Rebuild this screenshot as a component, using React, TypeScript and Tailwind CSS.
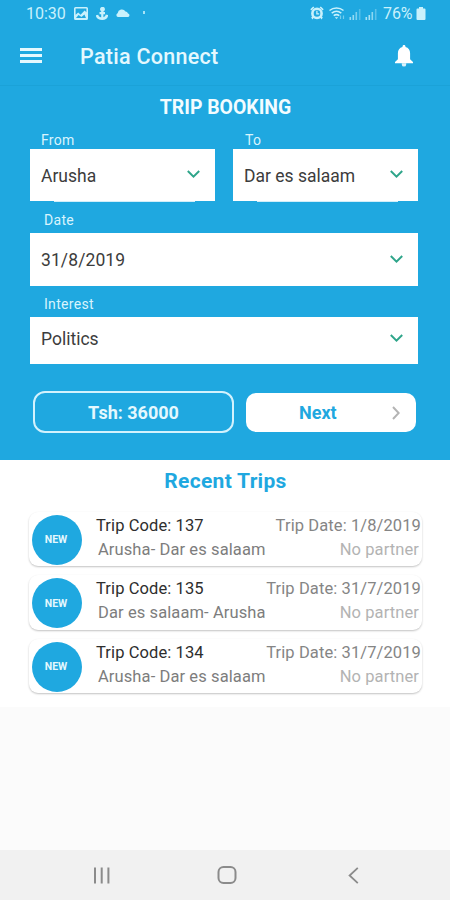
import React from 'react';

interface Trip {
  code: string;
  date: string;
  route: string;
  partner: string;
}

interface SelectFieldProps {
  label: string;
  value: string;
  labelClass: string;
  boxClass: string;
}

const trips: Trip[] = [
  { code: '137', date: '1/8/2019', route: 'Arusha- Dar es salaam', partner: 'No partner' },
  { code: '135', date: '31/7/2019', route: 'Dar es salaam- Arusha', partner: 'No partner' },
  { code: '134', date: '31/7/2019', route: 'Arusha- Dar es salaam', partner: 'No partner' }
];

const SignalIcon = ({ className }: { className: string }) => (
  <svg viewBox="0 0 12 12" className={className} fill="currentColor">
    <rect x="0" y="9" width="1.6" height="3" />
    <rect x="3" y="7" width="1.6" height="5" />
    <rect x="6" y="4" width="1.6" height="8" opacity="0.8" />
    <rect x="9.4" y="1" width="1.6" height="11" opacity="0.45" />
  </svg>
);

const StatusBar = () => (
  <div className="flex h-7 items-center pl-[26px] pr-[24px] text-[#c9f1fc]">
    <span className="w-[40px] whitespace-nowrap text-[16px] leading-7">10:30</span>
    <svg viewBox="0 0 14 13" className="mb-0.5 ml-[8px] h-[13px] w-[14px]">
      <path
        fill="currentColor"
        fillRule="evenodd"
        d="M1.5 0h11A1.5 1.5 0 0 1 14 1.5v10a1.5 1.5 0 0 1-1.5 1.5h-11A1.5 1.5 0 0 1 0 11.5v-10A1.5 1.5 0 0 1 1.5 0zM1.6 1.6v6.2l2.6-2.2 2.4 2.2 4-4.2 1.8 1.6V1.6zM2 11h10L10.4 7.5 7.5 10 4.5 8z"
      />
    </svg>
    <svg viewBox="0 0 12 13" className="mb-0.5 ml-[8px] h-[13px] w-[12px]" fill="none" stroke="currentColor">
      <circle cx="6.5" cy="2.3" r="1.7" strokeWidth="1.5" fill="currentColor" />
      <path strokeWidth="2.2" d="M6.3 4v7.5M3.5 6.2h5.5" />
      <path strokeWidth="2.6" d="M1 8c.5 2.600 2.500 3.700 5.300 3.700S10.600 10.400 11 7.800" />
    </svg>
    <svg viewBox="0 0 14 8" className="mb-[3px] ml-[8px] h-[8px] w-[14px]" fill="currentColor">
      <path d="M2 8A2 2 0 0 1 1.600 4.200 4.300 4.300 0 0 1 9.500 2.500 3 3 0 0 1 12 4.400 1.900 1.900 0 0 1 12.300 8z" />
    </svg>
    <span className="mb-[3px] ml-[13px] h-[3px] w-[2px] bg-current opacity-80" />
    <svg viewBox="0 0 14 14" className="mb-0.5 ml-auto h-[14px] w-[14px]">
      <path
        fill="currentColor"
        d="M.3 3.2 3.200.4l1.200 1.200-3 2.800zM13.700 3.200 10.800.4 9.600 1.600l3 2.800zM1.200 11.600l1.600-1.600 1.200 1.600-1.600 1.800zM12.800 11.600l-1.600-1.600-1.200 1.600 1.600 1.800z"
      />
      <circle cx="7" cy="7.4" r="4.6" fill="none" stroke="currentColor" strokeWidth="2.6" />
      <path fill="none" stroke="currentColor" strokeWidth="1.3" d="M6.9 4.8v3h2.3" />
    </svg>
    <svg viewBox="0 0 18 13" className="mb-0.5 ml-[5px] h-[13px] w-[18px]" fill="none" stroke="currentColor">
      <path strokeWidth="1.5" d="M.5 3.5C4.500.2 10.500.2 14.500 3.500" />
      <path strokeWidth="1.5" d="M2.7 6.2c3-2.400 6.600-2.400 9.600 0" />
      <path strokeWidth="1.5" d="M4.7 8.7c1.800-1.400 3.800-1.400 5.600 0" />
      <path fill="currentColor" stroke="none" d="M5.8 10.2h3.4L7.5 12z" />
      <path strokeWidth="1.2" opacity="0.5" d="M11.5 8.5V12M14.5 8.5V12" />
    </svg>
    <SignalIcon className="ml-0.5 h-[12px] w-[13px] opacity-70" />
    <SignalIcon className="ml-[3px] h-[12px] w-[13px] opacity-80" />
    <span className="ml-[5px] w-[31px] whitespace-nowrap text-[16px] leading-7 tracking-[-0.1px]">76%</span>
    <svg viewBox="0 0 10 13" className="mb-[1px] ml-[2px] h-[13px] w-[10px]" fill="currentColor">
      <path d="M3 0h4v1.5h1.5A1 1 0 0 1 9.500 2.500V12a1 1 0 0 1-1 1h-7a1 1 0 0 1-1-1V2.500a1 1 0 0 1 1-1H3z" />
    </svg>
  </div>
);

const AppBar = () => (
  <div className="flex h-[58px] items-center border-b border-[#1ba2d8] pl-[20px] pr-[37px]">
    <button type="button" className="mb-[2px] flex w-[22px] flex-col gap-[3px]" aria-label="Menu">
      <span className="h-[3px] w-full bg-[#e4f8fe]" />
      <span className="h-[3px] w-full bg-[#e4f8fe]" />
      <span className="h-[3px] w-full bg-[#e4f8fe]" />
    </button>
    <h1 className="ml-[38px] text-[21.5px] font-medium leading-none tracking-[0.28px] text-[#e4f8fe]">
      Patia Connect
    </h1>
    <svg viewBox="0 0 18 22" className="mb-[1px] ml-auto h-[22px] w-[18px] fill-white">
      <path d="M9 0c.9 0 1.500.6 1.500 1.500v.6c3 .7 4.600 3.200 4.600 6.200v6L18 17v1.300H0V17l2.900-2.700v-6c0-3 1.600-5.500 4.600-6.200v-.6C7.500.6 8.100 0 9 0z" />
      <path d="M6.8 18.200h4.400v1.200a2.200 2.200 0 0 1-4.400 0z" opacity="0.85" />
    </svg>
  </div>
);

const SelectField: React.FC<SelectFieldProps> = ({ label, value, labelClass, boxClass }) => (
  <div className="flex-1">
    <div className={`whitespace-nowrap text-[14px] leading-4 tracking-[0.3px] text-[#d9f4fd] ${labelClass}`}>
      {label}
    </div>
    <div className={`flex items-center justify-between bg-white pl-[11px] pr-[15px] ${boxClass}`}>
      <span className="mt-[2px] whitespace-nowrap text-[17.5px] text-[#3c3c3c]">{value}</span>
      <svg viewBox="0 0 13 8" className="mb-[2px] h-[8px] w-[13px]" fill="none" stroke="#2fa58a" strokeWidth="2">
        <path d="M.8 1l5.7 5.6L12.200 1" />
      </svg>
    </div>
  </div>
);

const BookingForm = () => (
  <section className="h-[374px] pl-[30px] pr-[32px] pt-[12px]">
    <h2 className="ml-[3px] text-center text-[19.4px] font-bold leading-5 text-[#f2fcff]">TRIP BOOKING</h2>
    <div className="mt-[14px] flex gap-[18px]">
      <SelectField
        label="From"
        value="Arusha"
        labelClass="h-[17px] pl-[11px]"
        boxClass="relative h-[52px] after:absolute after:left-[24px] after:right-[20px] after:top-full after:h-px after:bg-white/80"
      />
      <SelectField
        label="To"
        value="Dar es salaam"
        labelClass="h-[17px] pl-[12px]"
        boxClass="relative h-[52px] after:absolute after:left-[24px] after:right-[20px] after:top-full after:h-px after:bg-white/80"
      />
    </div>
    <div className="mt-[11px] flex">
      <SelectField label="Date" value="31/8/2019" labelClass="h-[21px] pl-[14px]" boxClass="h-[53px] tracking-[0.1px]" />
    </div>
    <div className="mt-[10px] flex">
      <SelectField label="Interest" value="Politics" labelClass="h-[21px] pl-[14px]" boxClass="h-[47px] pb-[4px]" />
    </div>
    <div className="ml-[3px] mr-[2px] mt-[27px] flex items-end gap-[12px]">
      <button
        type="button"
        className="h-[42px] w-[201px] rounded-[12px] border-2 border-[#d3f2fd] text-[18px] font-bold text-[#e4f8fe]"
      >
        Tsh: 36000
      </button>
      <button
        type="button"
        className="mb-[1px] flex h-[39px] flex-1 items-center rounded-[10px] bg-white pr-[16px] text-[18px] font-bold text-[#1fa8e0]"
      >
        <span className="ml-[53px]">Next</span>
        <svg viewBox="0 0 8 14" className="ml-auto h-[14px] w-[8px]" fill="none" stroke="#b4b4b4" strokeWidth="2">
          <path d="M1 1l5.7 6L1 13" />
        </svg>
      </button>
    </div>
  </section>
);

const TripCard = ({ trip }: { trip: Trip }) => (
  <div className="flex h-[54.5px] rounded-[9px] bg-white pl-[3px] pt-[3px] shadow-[0_1px_2px_rgba(0,0,0,0.24)]">
    <div className="flex h-[50px] w-[50px] shrink-0 items-center justify-center rounded-full bg-[#1fa8e0] pr-[2px] pt-[1px] text-[10.5px] font-bold text-[#e4f8fe]">
      NEW
    </div>
    <div className="-mt-[1px] ml-[14px] flex-1 whitespace-nowrap text-[16.5px] leading-6 tracking-[0.1px]">
      <div className="flex justify-between pr-[1px]">
        <span className="text-[#2e2e2e]">Trip Code: {trip.code}</span>
        <span className="text-[#858585]">Trip Date: {trip.date}</span>
      </div>
      <div className="flex justify-between pl-[2px] pr-[3px]">
        <span className="text-[#7d7d7d]">{trip.route}</span>
        <span className="text-[#b3b3b3]">{trip.partner}</span>
      </div>
    </div>
  </div>
);

const NavigationBar = () => (
  <nav className="flex h-[50px] items-center bg-[#f1f1f1] pl-[93px] pr-[91px] text-[#8b8b8b]">
    <svg viewBox="0 0 17 17" className="h-[17px] w-[17px]" fill="none" stroke="currentColor" strokeWidth="2">
      <path d="M2 .5v16M8.700.5v16M15.400.5v16" />
    </svg>
    <svg viewBox="0 0 20 18" className="ml-[107px] h-[18px] w-[20px]" fill="none" stroke="currentColor" strokeWidth="2">
      <rect x="1.5" y="1" width="17" height="16" rx="5" />
    </svg>
    <svg viewBox="0 0 11 17" className="ml-auto h-[17px] w-[11px]" fill="none" stroke="currentColor" strokeWidth="1.8">
      <path d="M9.8.8L1.600 8.500l8.200 7.700" />
    </svg>
  </nav>
);

const App: React.FC = () => {
  return (
    <div className="flex h-[900px] w-[450px] flex-col overflow-hidden bg-[#fbfbfb] font-[Roboto,sans-serif]">
      <header className="bg-[#1fa8e0]">
        <StatusBar />
        <AppBar />
      </header>
      <main className="flex-1">
        <div className="bg-[#1fa8e0]">
          <BookingForm />
        </div>
        <section className="h-[247px] bg-white pl-[29px] pr-[28px] pt-[10px]">
          <h2 className="text-center text-[21px] font-bold leading-[22px] tracking-[0.3px] text-[#1fa8e0]">Recent Trips</h2>
          <div className="mt-[19.5px] flex flex-col gap-[9px]">
            {trips.map((trip) => (
              <TripCard key={trip.code} trip={trip} />
            ))}
          </div>
        </section>
      </main>
      <NavigationBar />
    </div>
  );
};

export default App;
